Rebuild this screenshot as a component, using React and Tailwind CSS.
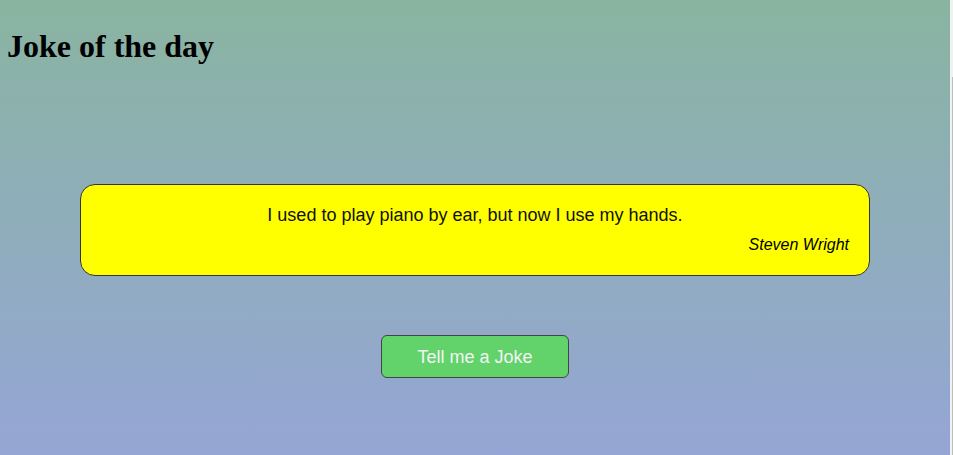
export default function App() {
  return (
    <div className="flex w-[953px] h-[455px] overflow-hidden">
      <div className="w-[950px] h-[455px] bg-gradient-to-b from-[#89b4a0] to-[#95a5d5] px-2 pt-2">
        <h1 className="-ml-px mt-[20px] text-[32px] leading-[37px] font-bold text-black font-['Liberation_Serif',serif]">
          Joke of the day
        </h1>
        <div className="mt-[119px] mx-[72px] rounded-[15px] border border-[#333] bg-[#ffff00] px-[20px] pt-[20px] pb-[21px] font-['Liberation_Sans',Arial,sans-serif]">
          <p className="text-center text-[18px] leading-[20px] text-[#111]">
            I used to play piano by ear, but now I use my hands.
          </p>
          <p className="mt-[11px] text-right text-[16px] leading-[18px] italic text-black">
            Steven Wright
          </p>
        </div>
        <div className="mt-[59px] flex justify-center">
          <button className="flex h-[43px] w-[188px] items-center justify-center rounded-[6px] border border-[#444] bg-[#62d36b] text-[18px] leading-[20px] text-[#f4f4f4] font-['Liberation_Sans',Arial,sans-serif]">
            Tell me a Joke
          </button>
        </div>
      </div>
      <div className="flex h-[455px] w-[3px] flex-col bg-[#f1f1f1]">
        <div className="h-[77px]" />
        <div className="ml-[2px] flex-1 w-[1px] bg-[#bdbdbd]" />
      </div>
    </div>
  );
}
